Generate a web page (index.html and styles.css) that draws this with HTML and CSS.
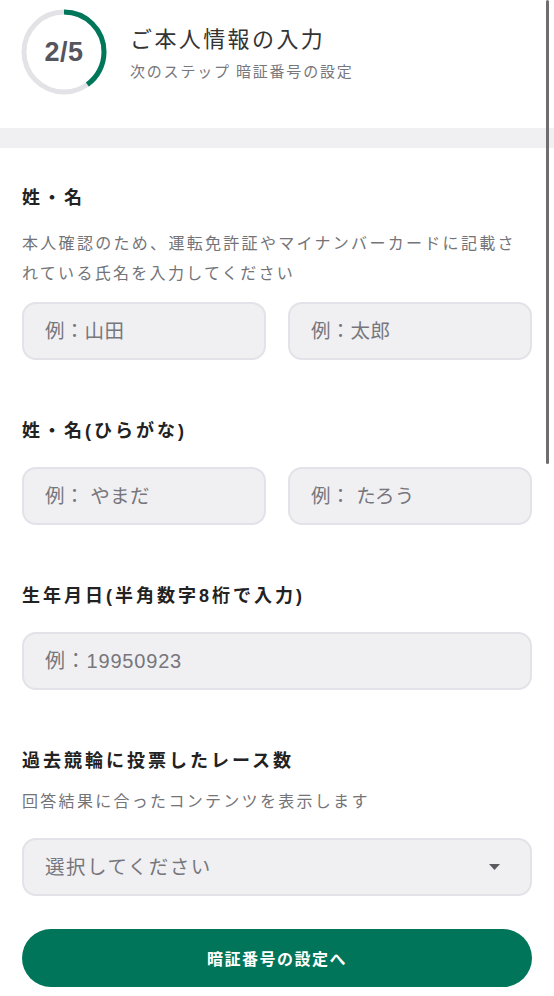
FILE: index.html
```html
<!DOCTYPE html>
<html lang="ja">
<head>
<meta charset="utf-8">
<title>ご本人情報の入力</title>
<link rel="stylesheet" href="styles.css">
</head>
<body>
<div class="page">
  <header class="header">
    <div class="progress">
      <svg class="progress-ring" width="86" height="86" viewBox="0 0 86 86">
        <circle cx="43" cy="43" r="40" fill="none" stroke="#e3e3e7" stroke-width="5"/>
        <circle cx="43" cy="43" r="40" fill="none" stroke="#00765a" stroke-width="5"
          stroke-dasharray="100.53 251.33" transform="rotate(-90 43 43)"/>
      </svg>
      <span class="progress-text">2/5</span>
    </div>
    <div class="header-text">
      <h1 class="title">ご本人情報の入力</h1>
      <p class="subtitle">次のステップ 暗証番号の設定</p>
    </div>
  </header>
  <div class="band"></div>
  <main class="form">
    <section class="field field-first">
      <h2 class="label">姓・名</h2>
      <p class="desc desc-two">本人確認のため、運転免許証やマイナンバーカードに記載されている氏名を入力してください</p>
      <div class="row">
        <input class="input" type="text" placeholder="例：山田">
        <input class="input" type="text" placeholder="例：太郎">
      </div>
    </section>
    <section class="field">
      <h2 class="label">姓・名(ひらがな)</h2>
      <div class="row">
        <input class="input" type="text" placeholder="例： やまだ">
        <input class="input" type="text" placeholder="例： たろう">
      </div>
    </section>
    <section class="field">
      <h2 class="label">生年月日(半角数字8桁で入力)</h2>
      <div class="row">
        <input class="input input-num" type="text" placeholder="例：19950923">
      </div>
    </section>
    <section class="field field-last">
      <h2 class="label">過去競輪に投票したレース数</h2>
      <p class="desc desc-one">回答結果に合ったコンテンツを表示します</p>
      <div class="select-wrap">
        <select class="select">
          <option>選択してください</option>
        </select>
        <svg class="select-arrow" width="11" height="6" viewBox="0 0 11 6"><path d="M0 0 H11 L5.5 6 Z" fill="#5a5a60"/></svg>
      </div>
    </section>
    <button class="btn" type="button">暗証番号の設定へ</button>
  </main>
  <div class="scrollbar"></div>
</div>
</body>
</html>
```

FILE: styles.css
```css
* { box-sizing: border-box; }
html, body { margin: 0; padding: 0; background: #ffffff; }
body {
  font-family: "Liberation Sans", "Noto Sans CJK JP", sans-serif;
  color: #222;
  width: 554px;
  height: 996px;
  overflow: hidden;
}
.page { position: relative; }
.header {
  height: 128px;
  display: flex;
  align-items: flex-start;
  padding: 9px 0 0 21px;
}
.progress {
  position: relative;
  width: 86px;
  height: 86px;
  flex: none;
}
.progress-ring { display: block; }
.progress-text {
  position: absolute;
  inset: 0;
  display: flex;
  align-items: center;
  justify-content: center;
  font-family: "Liberation Sans", Arial, sans-serif;
  font-weight: 700;
  font-size: 27px;
  letter-spacing: 0.5px;
  color: #55555e;
}
.header-text {
  margin-left: 23px;
  padding-top: 14px;
}
.title {
  margin: 0;
  font-family: "Noto Sans CJK JP", sans-serif;
  font-size: 22px;
  font-weight: 400;
  line-height: 28px;
  letter-spacing: 2.4px;
  color: #333;
}
.subtitle {
  margin: 9px 0 0;
  font-family: "Noto Sans CJK JP", sans-serif;
  font-size: 15px;
  line-height: 22px;
  letter-spacing: 1.8px;
  color: #77777c;
}
.band { height: 20px; background: #f0f0f2; }
.form { padding: 0 22px; }
.field { padding-top: 58px; }
.field-first { padding-top: 37px; }
.label {
  margin: 0;
  font-size: 18px;
  line-height: 26px;
  font-weight: 700;
  letter-spacing: 3px;
  color: #222;
}
.desc {
  margin: 0;
  font-family: "Noto Sans CJK JP", sans-serif;
  font-size: 16px;
  line-height: 30px;
  letter-spacing: 2.3px;
  color: #737378;
}
.desc-two { margin-top: 16px; margin-bottom: 15px; }
.desc-one { margin-top: 11px; margin-bottom: 23px; }
.row {
  display: flex;
  gap: 22px;
  margin-top: 23px;
}
.desc + .row { margin-top: 0; }
.input, .select {
  flex: 1;
  min-width: 0;
  height: 58px;
  border: 2px solid #e2e2e8;
  border-radius: 14px;
  background: #f0f0f3;
  padding: 0 0 0 21px;
  font-family: "Liberation Sans", "Noto Sans CJK JP", sans-serif;
  font-size: 19.5px;
  letter-spacing: 0.3px;
  color: #6e6e74;
  outline: none;
}
.input-num { font-size: 20px; letter-spacing: 0.8px; }
.input::placeholder { color: #76767c; opacity: 1; }
.select-wrap { position: relative; }
.select {
  width: 100%;
  appearance: none;
  -webkit-appearance: none;
  letter-spacing: 1.5px;
  color: #76767c;
}
.select-arrow {
  position: absolute;
  right: 32px;
  top: 26px;
}
.btn {
  display: block;
  width: 100%;
  height: 58px;
  margin-top: 33px;
  border: none;
  border-radius: 29px;
  background: #00755a;
  color: #fff;
  font-family: "Noto Sans CJK JP", sans-serif;
  font-size: 16px;
  font-weight: 700;
  letter-spacing: 1.5px;
}
.scrollbar {
  position: absolute;
  top: 0;
  left: 546px;
  width: 3px;
  height: 464px;
  border-radius: 2px;
  background: #6e6e6e;
}
```
